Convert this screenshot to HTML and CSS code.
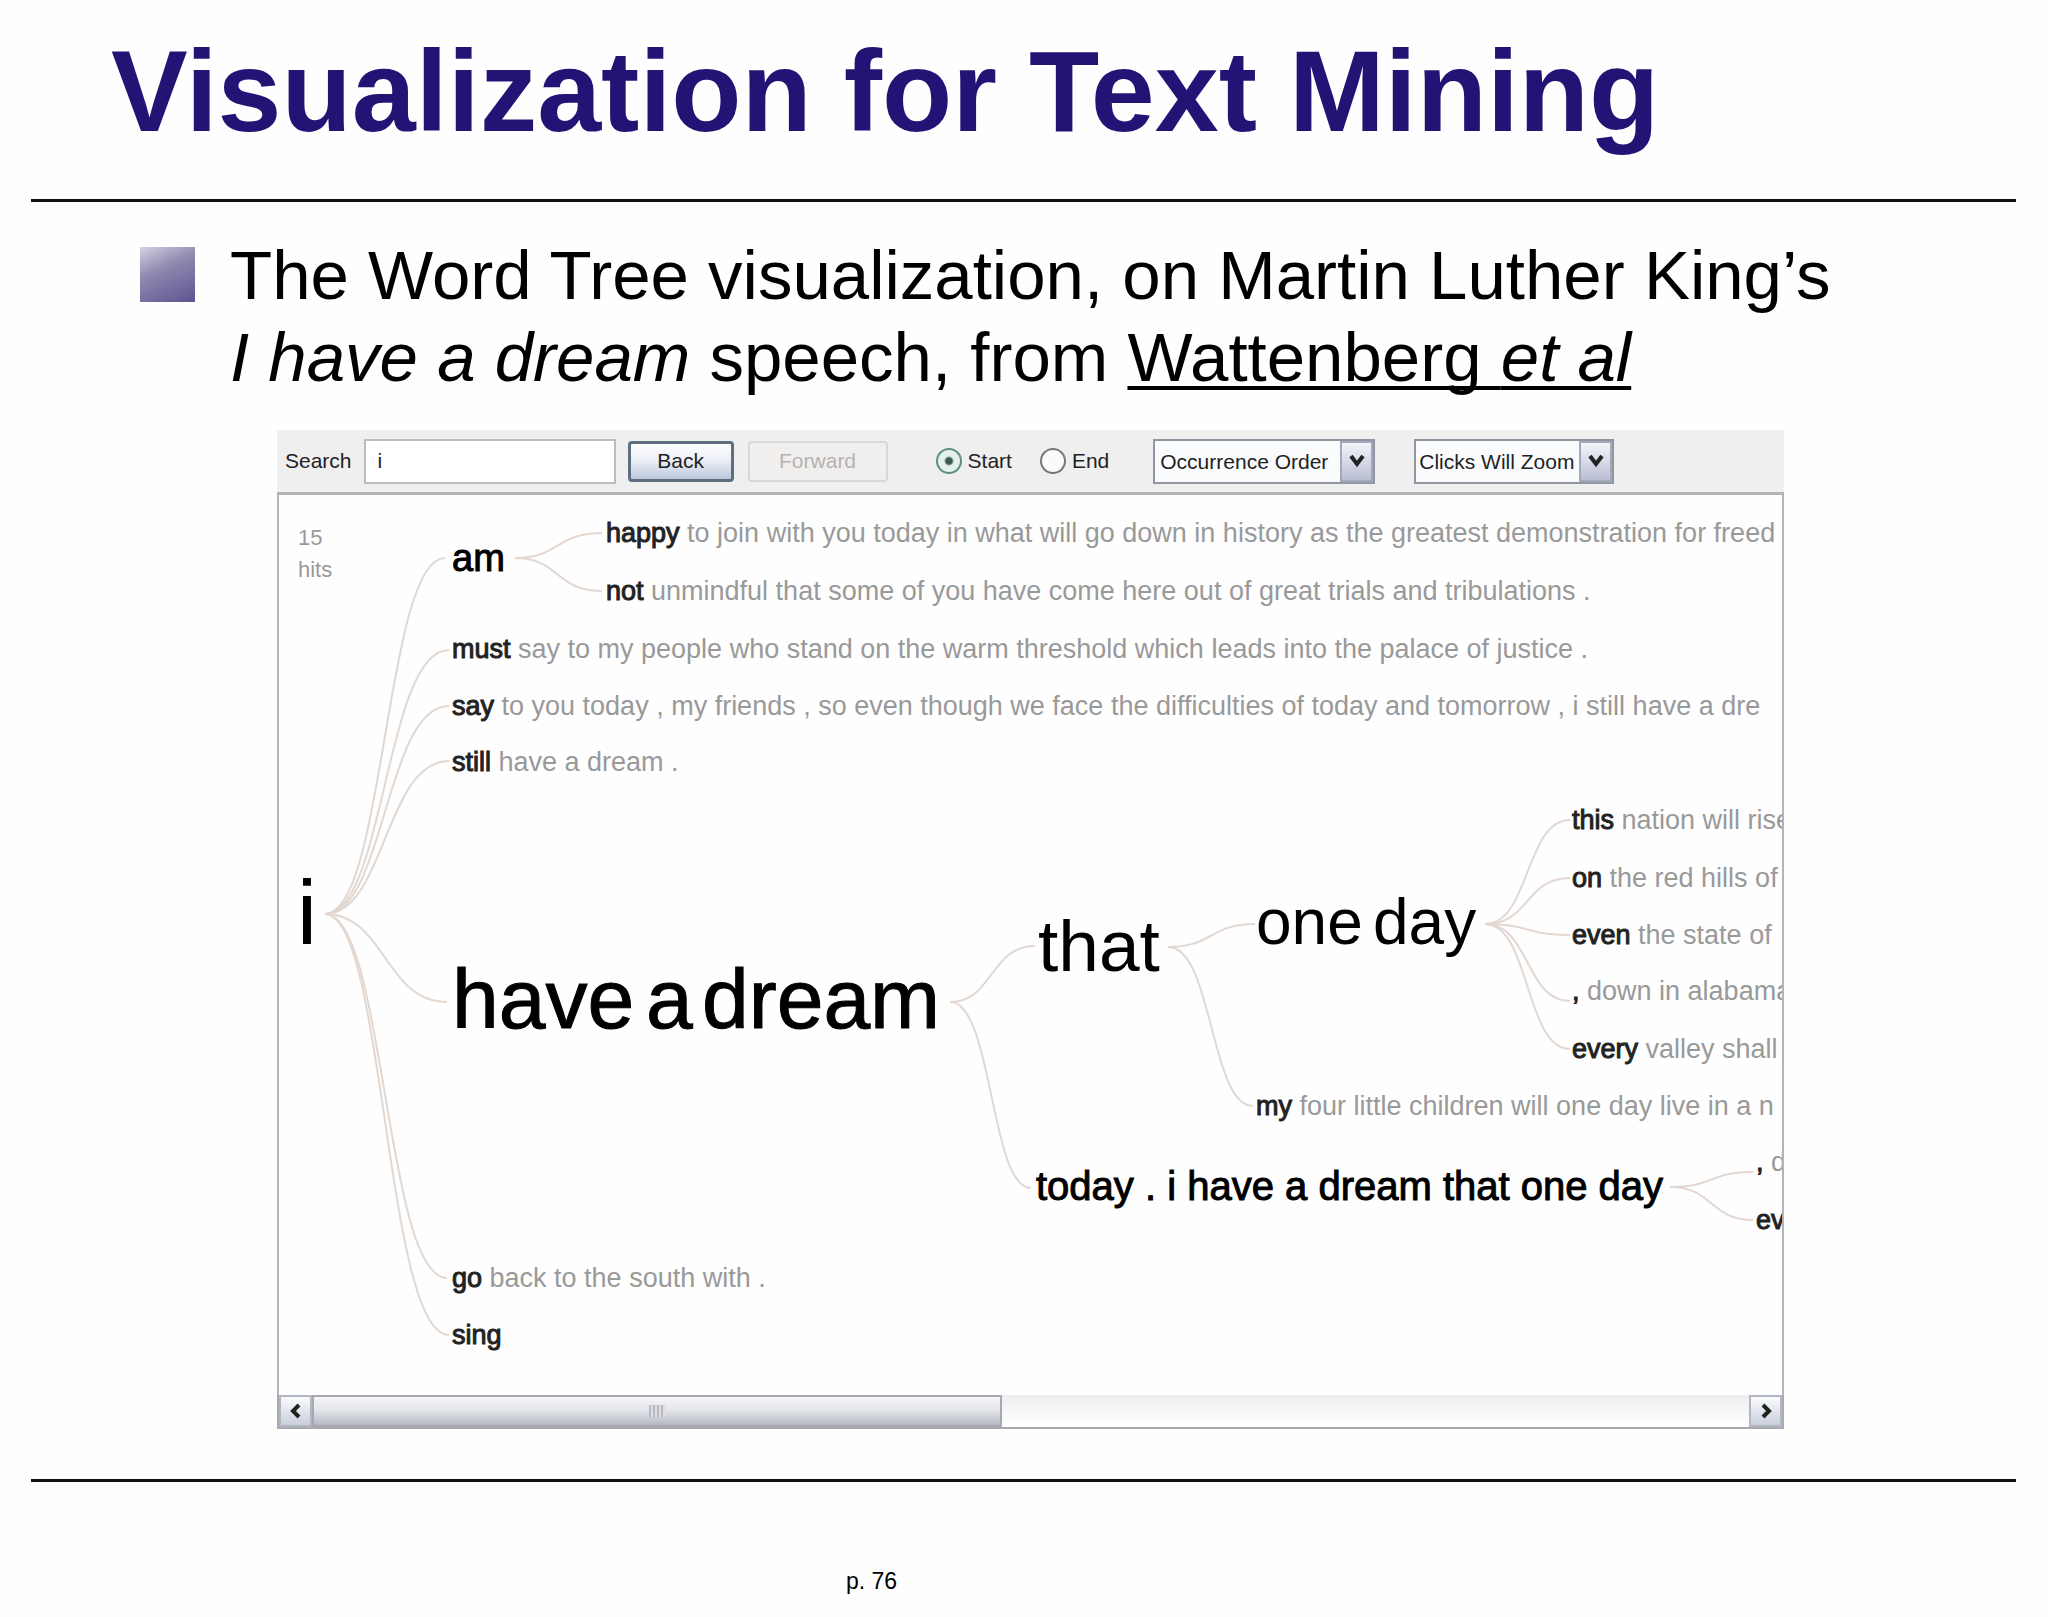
FILE: index.html
```html
<!DOCTYPE html>
<html lang="en">
<head>
  <meta charset="UTF-8">
  <title>Visualization for Text Mining</title>
  <link rel="stylesheet" href="styles.css">
</head>
<body>

  <header class="slide-header">
    <h1>Visualization for Text Mining</h1>
  </header>

  <main>
    <ul class="points">
      <li>
        <span class="bullet"></span>
        <p>The Word Tree visualization, on Martin Luther King’s<br>
        <em>I have a dream</em> speech, from <a href="#">Wattenberg <em>et al</em></a></p>
      </li>
    </ul>

    <section class="app">
      <form class="toolbar">
        <label for="search">Search</label>
        <input type="text" id="search" class="search" value="i">
        <button type="button" class="btn back">Back</button>
        <button type="button" class="btn forward" disabled>Forward</button>
        <label class="radio start"><input type="radio" name="anchor" checked>Start</label>
        <label class="radio end"><input type="radio" name="anchor">End</label>
        <div class="picker order">
          <select aria-label="Order"><option>Occurrence Order</option></select>
          <span class="arrow"><svg viewBox="0 0 16 14"><path d="M2 2l6 8 6-8"/></svg></span>
        </div>
        <div class="picker clicks">
          <select aria-label="Click action"><option>Clicks Will Zoom</option></select>
          <span class="arrow"><svg viewBox="0 0 16 14"><path d="M2 2l6 8 6-8"/></svg></span>
        </div>
      </form>

      <svg class="tree" viewBox="0 0 1503 900">
        <!-- branches -->
        <g class="links">
          <path d="M46 419C106 419 106 63 166 63"/>
          <path d="M46 419C106 419 106 155 170 155"/>
          <path d="M46 419C106 419 106 211 170 211"/>
          <path d="M46 419C106 419 106 266 170 266"/>
          <path d="M46 419C106 419 106 507 168 507"/>
          <path d="M46 419C106 419 106 783 168 783"/>
          <path d="M46 419C106 419 106 840 170 840"/>
          <path d="M236 63C281 63 276 38 323 38"/>
          <path d="M236 63C281 63 276 96 323 96"/>
          <path d="M671 507C714 507 711 451 756 451"/>
          <path d="M671 507C714 507 711 693 752 693"/>
          <path d="M889 452C934 452 931 429 976 429"/>
          <path d="M889 452C934 452 931 611 974 611"/>
          <path d="M1206 429C1251 429 1246 325 1291 325"/>
          <path d="M1206 429C1251 429 1246 383 1291 383"/>
          <path d="M1206 429C1251 429 1246 440 1291 440"/>
          <path d="M1206 429C1251 429 1246 506 1291 506"/>
          <path d="M1206 429C1251 429 1246 554 1291 554"/>
          <path d="M1391 692C1434 692 1431 677 1474 677"/>
          <path d="M1391 692C1434 692 1431 725 1474 725"/>
        </g>

        <g class="hits">
          <text x="19" y="50">15</text>
          <text x="19" y="82">hits</text>
        </g>

        <text class="root" x="18" y="449">i</text>

        <text class="am" x="173" y="76">am</text>
        <text class="leaf" x="327" y="47"><tspan>happy</tspan> to join with you today in what will go down in history as the greatest demonstration for freed</text>
        <text class="leaf" x="327" y="105"><tspan>not</tspan> unmindful that some of you have come here out of great trials and tribulations .</text>
        <text class="leaf" x="173" y="163"><tspan>must</tspan> say to my people who stand on the warm threshold which leads into the palace of justice .</text>
        <text class="leaf" x="173" y="220"><tspan>say</tspan> to you today , my friends , so even though we face the difficulties of today and tomorrow , i still have a dre</text>
        <text class="leaf" x="173" y="276"><tspan>still</tspan> have a dream .</text>
        <text class="leaf" x="173" y="792"><tspan>go</tspan> back to the south with .</text>
        <text class="leaf" x="173" y="849"><tspan>sing</tspan></text>

        <text class="dream" y="533"><tspan x="173">have</tspan> <tspan x="367">a</tspan> <tspan x="423">dream</tspan></text>
        <text class="that" x="759" y="476">that</text>
        <text class="day" y="449"><tspan x="977">one</tspan> <tspan x="1094">day</tspan></text>
        <text class="today" x="757" y="705">today . i have a dream that one day</text>

        <text class="leaf" x="1293" y="334"><tspan>this</tspan> nation will rise</text>
        <text class="leaf" x="1293" y="392"><tspan>on</tspan> the red hills of</text>
        <text class="leaf" x="1293" y="449"><tspan>even</tspan> the state of</text>
        <text class="leaf" x="1293" y="505"><tspan>,</tspan> down in alabama</text>
        <text class="leaf" x="1293" y="563"><tspan>every</tspan> valley shall</text>
        <text class="leaf" x="977" y="620"><tspan>my</tspan> four little children will one day live in a n</text>
        <text class="leaf" x="1477" y="676"><tspan>,</tspan> d</text>
        <text class="leaf" x="1477" y="734"><tspan>ev</tspan></text>
      </svg>

      <div class="scrollbar">
        <button type="button" aria-label="Scroll left"><svg viewBox="0 0 14 16"><path d="M10 2l-6 6 6 6"/></svg></button>
        <div class="track"><div class="thumb"><span></span></div></div>
        <button type="button" aria-label="Scroll right"><svg viewBox="0 0 14 16"><path d="M4 2l6 6-6 6"/></svg></button>
      </div>
    </section>
  </main>

  <footer>p. 76</footer>

</body>
</html>
```

FILE: styles.css
```css
* {
  box-sizing: border-box;
}
body {
  margin: 0;
  background: #fefefe;
  color: #000;
  font-family: "Liberation Sans", Arial, sans-serif;
}
.slide-header {
  margin: 0 32px 0 31px;
  padding: 25px 80px 42px;
  border-bottom: 3px solid #111;
}
h1 {
  margin: 0;
  color: #231375;
  font-size: 115px;
  line-height: 132px;
}
.points {
  margin: 33px 0 31px;
  padding: 0 140px;
  list-style: none;
}
.points li {
  display: flex;
  gap: 35px;
}
.points p {
  margin: 0;
  font-size: 69px;
  line-height: 82px;
}
.points a {
  color: inherit;
  text-decoration-thickness: 4px;
  text-underline-offset: 5px;
  text-decoration-skip-ink: none;
}
.bullet {
  width: 55px;
  height: 55px;
  margin-top: 12px;
  background: linear-gradient(155deg, #d4d2e2, #8d89b0 40%, #5d5490);
}

/* word tree window */
.app {
  margin: 0 264px 50px 277px;
}
.toolbar {
  display: flex;
  align-items: center;
  height: 62px;
  padding-left: 8px;
  background: #efeff0;
  font-size: 21px;
  color: #222;
}
.toolbar input, .toolbar select, .btn {
  font: inherit;
  color: inherit;
}
.search {
  width: 252px;
  height: 45px;
  margin: 0 12px;
  padding: 0 12px;
  border: 2px solid #b9bcc0;
  background: #fff;
}
.btn {
  height: 41px;
  border-radius: 4px;
}
.back {
  width: 106px;
  border: 3px solid #5f6f80;
  background: linear-gradient(#fff, #e9edf5 50%, #bcc7dc);
}
.toolbar .forward {
  width: 140px;
  margin-left: 14px;
  border: 2px solid #d9d7d7;
  background: #f1efee;
  color: #b5b2b2;
}
.radio {
  display: flex;
  align-items: center;
  gap: 6px;
}
.radio input {
  appearance: none;
  width: 26px;
  height: 26px;
  margin: 0;
  border: 2px solid #777;
  border-radius: 50%;
  background: #fafafa;
}
.radio input:checked {
  border-color: #5d8f7c;
  background: radial-gradient(circle, #3c5a4e 3px, #e4f1ea 5px);
}
.start {
  margin-left: 48px;
}
.end {
  margin-left: 28px;
}
.picker {
  display: flex;
  height: 45px;
  border: 2px solid #9296a3;
  background: #fafbfd;
}
.picker select {
  flex: 1;
  min-width: 0;
  padding: 0 0 0 5px;
  border: 0;
  appearance: none;
  background: none;
}
.order {
  width: 222px;
  margin-left: 44px;
}
.clicks {
  width: 200px;
  margin-left: 39px;
}
.clicks select {
  padding-left: 3px;
}
.arrow {
  display: flex;
  align-items: center;
  justify-content: center;
  width: 33px;
  border: 2px solid #a3a8ba;
  background: linear-gradient(#f4f5fa, #b9bdd2);
}
.arrow svg {
  width: 16px;
  height: 14px;
}
.arrow path, .scrollbar path {
  fill: none;
  stroke: #222;
  stroke-width: 4;
}

.tree {
  display: block;
  width: 100%;
  border: solid #b4b4b6;
  border-width: 3px 2px 0;
}
.links {
  fill: none;
  stroke: #e2d8d1;
  stroke-width: 2;
}
.hits {
  font-size: 22px;
  fill: #999;
}
.leaf {
  font-size: 27px;
  fill: #999;
}
.leaf tspan {
  fill: #222;
  stroke: #222;
}
.am, .dream, .today {
  stroke: #000;
}
.root {
  font-size: 90px;
}
.am {
  font-size: 38px;
}
.dream {
  font-size: 84px;
}
.that {
  font-size: 73px;
}
.day {
  font-size: 64px;
}
.today {
  font-size: 40px;
}
.leaf tspan, .am, .today {
  stroke-width: 1;
}

.scrollbar {
  display: flex;
  height: 34px;
  border: solid #a9a9ae;
  border-width: 0 2px 2px;
}
.scrollbar button {
  display: flex;
  align-items: center;
  justify-content: center;
  width: 33px;
  padding: 0;
  border: 2px solid #b2b6c2;
  background: linear-gradient(#fafbfd, #c9cfdb);
}
.scrollbar svg {
  width: 14px;
  height: 16px;
}
.track {
  flex: 1;
  background: linear-gradient(#ededf1, #fff);
}
.thumb {
  display: flex;
  align-items: center;
  justify-content: center;
  width: 48%;
  height: 100%;
  border: 2px solid #a7a9b0;
  background: linear-gradient(#f6f6f7, #e2e3e8 50%, #b3b8c4);
}
.thumb span {
  width: 16px;
  height: 12px;
  background: repeating-linear-gradient(90deg, #b9bac1 0 2px, #dcdde2 2px 4px);
}

footer {
  margin: 0 32px 0 31px;
  padding: 85px 815px 22px;
  border-top: 3px solid #111;
  font-size: 23px;
  line-height: 28px;
}
```
